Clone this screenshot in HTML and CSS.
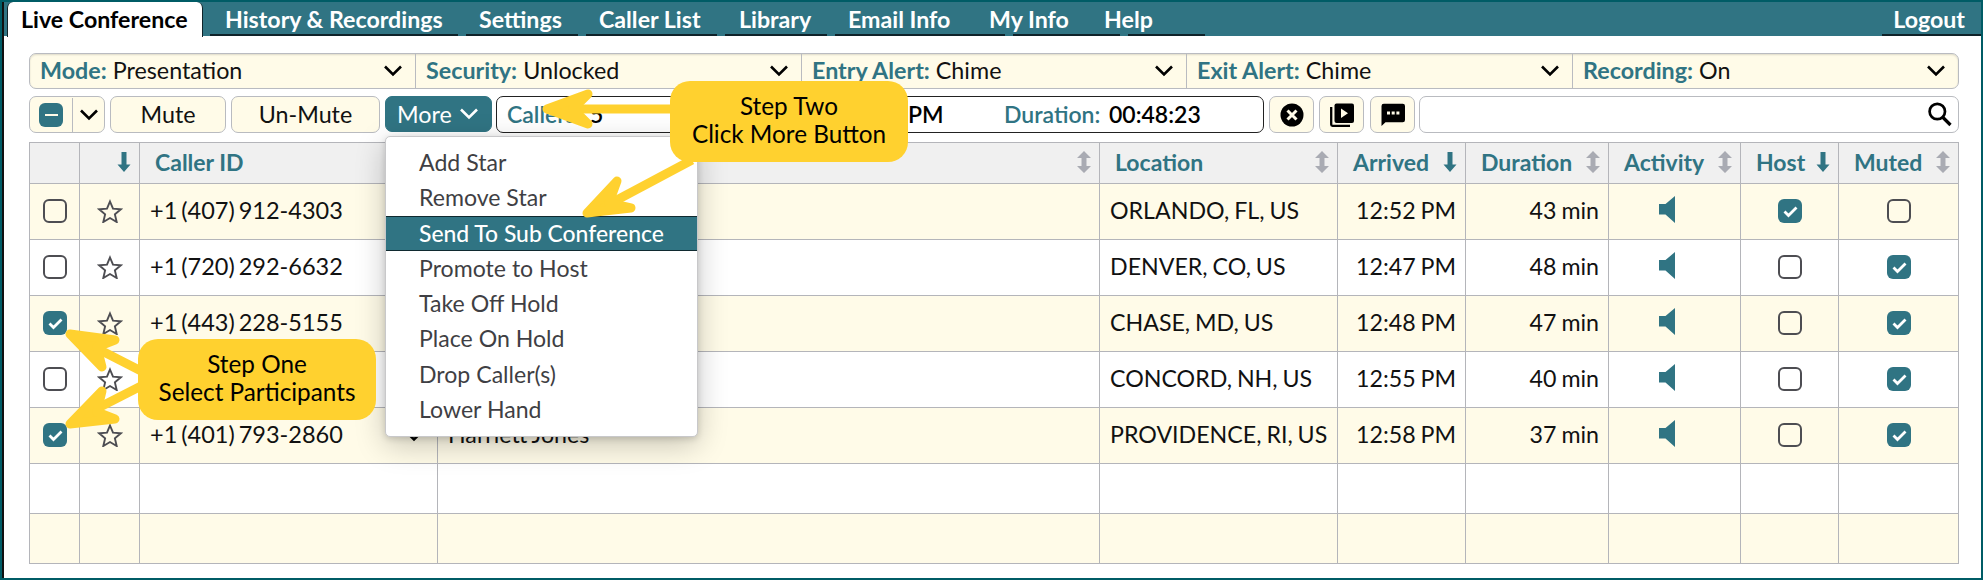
FILE: index.html
```html
<!DOCTYPE html>
<html lang="en">
<head>
<meta charset="utf-8">
<title>Live Conference</title>
<link rel="stylesheet" href="styles.css">
</head>
<body>
<svg class="defs" width="0" height="0" aria-hidden="true">
  <symbol id="chev" viewBox="0 0 18 12"><path d="M1 1.500 9 9.500l8-8" fill="none" stroke="currentColor" stroke-width="2.600"/></symbol>
  <symbol id="down" viewBox="0 0 14 20"><path d="M4.500 0h5v12.500H13.500L7 20 .5 12.500h4z" fill="currentColor"/></symbol>
  <symbol id="both" viewBox="0 0 14 22"><path d="M7 0l7 7H9.500v8H14l-7 7-7-7h4.500V7H0z" fill="currentColor"/></symbol>
  <symbol id="star" viewBox="0 0 26 24"><path d="M13 2.500l3 7.200 7.800.600-5.900 5.100 1.800 7.600-6.700-4-6.700 4 1.800-7.600L2.200 10.300l7.800-.600z" fill="none" stroke="#4d4d52" stroke-width="1.900"/></symbol>
  <symbol id="speaker" viewBox="0 0 16 27"><path d="M0 8h6.500L16 0v27L6.500 18.500H0z" fill="#307483"/></symbol>
  <symbol id="tick" viewBox="0 0 24 24"><path d="M6.500 12.500l4 4L18.500 8.500" fill="none" stroke="#fff" stroke-width="2.800"/></symbol>
</svg>
<div class="app">
  <nav class="nav">
    <a class="tab active">Live Conference</a>
    <a class="tab t1">History &amp; Recordings</a>
    <a class="tab t2">Settings</a>
    <a class="tab t3">Caller List</a>
    <a class="tab t4">Library</a>
    <a class="tab t5">Email Info</a>
    <a class="tab t6">My Info</a>
    <a class="tab t7">Help</a>
    <a class="tab out">Logout</a>
  </nav>
  <div class="rules"><i class="r1"></i><i class="r2"></i><i class="r3"></i><i class="r4"></i><i class="r5"></i><i class="r6"></i><i class="r7"></i><i class="r8"></i></div>
  <main class="content">
    <div class="modes">
      <div class="mode"><b>Mode:</b><span>Presentation</span><svg class="chev"><use href="#chev"/></svg></div>
      <div class="mode"><b>Security:</b><span>Unlocked</span><svg class="chev"><use href="#chev"/></svg></div>
      <div class="mode"><b>Entry Alert:</b><span>Chime</span><svg class="chev"><use href="#chev"/></svg></div>
      <div class="mode"><b>Exit Alert:</b><span>Chime</span><svg class="chev"><use href="#chev"/></svg></div>
      <div class="mode"><b>Recording:</b><span>On</span><svg class="chev"><use href="#chev"/></svg></div>
    </div>
    <div class="tools">
      <div class="select"><span class="all"><span class="box on minus"></span></span><span class="drop"><svg class="chev"><use href="#chev"/></svg></span></div>
      <button class="btn mute">Mute</button>
      <button class="btn unmute">Un-Mute</button>
      <div class="more-wrap">
        <button class="btn more">More<svg class="chev"><use href="#chev"/></svg></button>
        <div class="menu">
          <a>Add Star</a><a>Remove Star</a><a class="hot">Send To Sub Conference</a><a>Promote to Host</a><a>Take Off Hold</a><a>Place On Hold</a><a>Drop Caller(s)</a><a>Lower Hand</a>
        </div>
      </div>
      <div class="status"><b class="s1">Callers:</b><span class="s2">5</span><span class="s3">PM</span><b class="s4">Duration:</b><span class="s5">00:48:23</span></div>
      <button class="btn icon"><svg width="24" height="24" viewBox="0 0 24 24"><circle cx="12" cy="12" r="11.500"/><path d="M7.500 7.500l9 9m0-9l-9 9" stroke="#fffbe8" stroke-width="3"/></svg></button>
      <button class="btn icon"><svg width="24" height="24" viewBox="0 0 24 24"><path d="M4.500 2.500a2 2 0 0 1 2-2H22a2 2 0 0 1 2 2V18a2 2 0 0 1-2 2H6.500a2 2 0 0 1-2-2z"/><path d="M1.200 4v17.500q0 1.300 1.300 1.300H20" fill="none" stroke="#000" stroke-width="2.300"/><path d="M11 5.500v9.500l7-4.700z" fill="#fffbe8"/></svg></button>
      <button class="btn icon last"><svg width="24" height="24" viewBox="0 0 24 24"><path d="M.5 3a2.300 2.300 0 0 1 2.300-2.300h19A2.300 2.300 0 0 1 24 3v14a2.300 2.300 0 0 1-2.300 2.300H4.500L.5 23z"/><path d="M6 8.500h3v3H6zm4.700 0h3v3h-3zm4.700 0h3v3h-3z" fill="#fffbe8"/></svg></button>
      <div class="search"><svg width="24" height="25" viewBox="0 0 24 25"><circle cx="9.300" cy="9.500" r="7.700" fill="none" stroke="#000" stroke-width="2.700"/><path d="M14.500 15l8 8" stroke="#000" stroke-width="3.200"/></svg></div>
    </div>
    <table class="grid">
      <colgroup><col class="c1"><col class="c2"><col class="c3"><col class="c4"><col class="c5"><col class="c6"><col class="c7"><col class="c8"><col class="c9"><col class="c10"></colgroup>
      <thead><tr>
        <th></th>
        <th><div class="h"><svg class="down"><use href="#down"/></svg></div></th>
        <th><div class="h">Caller ID</div></th>
        <th><div class="h"><svg class="both"><use href="#both"/></svg></div></th>
        <th><div class="h">Location<svg class="both"><use href="#both"/></svg></div></th>
        <th><div class="h">Arrived<svg class="down"><use href="#down"/></svg></div></th>
        <th><div class="h">Duration<svg class="both"><use href="#both"/></svg></div></th>
        <th><div class="h">Activity<svg class="both"><use href="#both"/></svg></div></th>
        <th><div class="h">Host<svg class="down"><use href="#down"/></svg></div></th>
        <th><div class="h">Muted<svg class="both"><use href="#both"/></svg></div></th>
      </tr></thead>
      <tbody>
        <tr><td class="mid"><span class="box"></span></td><td class="mid"><svg class="star"><use href="#star"/></svg></td><td class="tel">+1 (407) 912-4303</td><td></td><td>ORLANDO, FL, US</td><td class="num">12:52 PM</td><td class="num">43 min</td><td class="mid act"><svg class="speaker"><use href="#speaker"/></svg></td><td class="mid"><span class="box on"><svg><use href="#tick"/></svg></span></td><td class="mid"><span class="box"></span></td></tr>
        <tr><td class="mid"><span class="box"></span></td><td class="mid"><svg class="star"><use href="#star"/></svg></td><td class="tel">+1 (720) 292-6632</td><td></td><td>DENVER, CO, US</td><td class="num">12:47 PM</td><td class="num">48 min</td><td class="mid act"><svg class="speaker"><use href="#speaker"/></svg></td><td class="mid"><span class="box"></span></td><td class="mid"><span class="box on"><svg><use href="#tick"/></svg></span></td></tr>
        <tr><td class="mid"><span class="box on"><svg><use href="#tick"/></svg></span></td><td class="mid"><svg class="star"><use href="#star"/></svg></td><td class="tel">+1 (443) 228-5155</td><td></td><td>CHASE, MD, US</td><td class="num">12:48 PM</td><td class="num">47 min</td><td class="mid act"><svg class="speaker"><use href="#speaker"/></svg></td><td class="mid"><span class="box"></span></td><td class="mid"><span class="box on"><svg><use href="#tick"/></svg></span></td></tr>
        <tr><td class="mid"><span class="box"></span></td><td class="mid"><svg class="star"><use href="#star"/></svg></td><td></td><td></td><td>CONCORD, NH, US</td><td class="num">12:55 PM</td><td class="num">40 min</td><td class="mid act"><svg class="speaker"><use href="#speaker"/></svg></td><td class="mid"><span class="box"></span></td><td class="mid"><span class="box on"><svg><use href="#tick"/></svg></span></td></tr>
        <tr><td class="mid"><span class="box on"><svg><use href="#tick"/></svg></span></td><td class="mid"><svg class="star"><use href="#star"/></svg></td><td class="tel"><div class="caller">+1 (401) 793-2860<svg class="chev"><use href="#chev"/></svg></div></td><td>Harriett Jones</td><td>PROVIDENCE, RI, US</td><td class="num">12:58 PM</td><td class="num">37 min</td><td class="mid act"><svg class="speaker"><use href="#speaker"/></svg></td><td class="mid"><span class="box"></span></td><td class="mid"><span class="box on"><svg><use href="#tick"/></svg></span></td></tr>
        <tr class="empty"><td></td><td></td><td></td><td></td><td></td><td></td><td></td><td></td><td></td><td></td></tr>
        <tr class="empty"><td></td><td></td><td></td><td></td><td></td><td></td><td></td><td></td><td></td><td></td></tr>
      </tbody>
    </table>
  </main>
  <svg class="arrows" width="1983" height="580" viewBox="0 0 1983 580">
    <g class="shaft"><path d="M675 109H570"/><path d="M692 160L615 201"/><path d="M145 373L100 350"/><path d="M145 384L100 407"/></g>
    <g class="head"><path d="M588 94L547 109 588 124 573 109z"/><path d="M617 181L587 213 631 208 609 203z"/><path d="M102 367L70 334 115 340 97 347z"/><path d="M102 391L70 424 115 419 97 412z"/></g>
  </svg>
  <div class="callout two">Step Two<br>Click More Button</div>
  <div class="callout one">Step One<br>Select Participants</div>
</div>
</body>
</html>
```
FILE: styles.css
```css
* { box-sizing: border-box; }
body { margin: 0; font-family: Lato, "Liberation Sans", sans-serif; font-size: 23.300px; color: #111; }
.defs { position: absolute; }
svg { flex: none; }
.app { position: relative; width: 1983px; height: 580px; border: 2px solid #005c66; background: #fff; overflow: hidden; box-shadow: inset 2px 0 #101010; }
.nav { height: 32px; margin-left: 2px; background: #307483; display: flex; position: relative; }
.tab { color: #fff; font-weight: 700; font-size: 23.200px; line-height: 34px; white-space: nowrap; height: 32px; }
.tab.active { width: 196px; height: 35px; margin-left: 3px; margin-right: 22px; padding-left: 13px; background: #fff; color: #000; border: solid #10242a; border-width: 0 1px; border-radius: 6px 6px 0 0; z-index: 1; }
.t1 { width: 254px; } .t2 { width: 120px; } .t3 { width: 140px; } .t4 { width: 109px; } .t5 { width: 141px; } .t6 { width: 115px; }
.out { margin-left: auto; margin-right: 16px; }
.rules { height: 2px; margin-left: 2px; padding-left: 206px; background: #307483; display: flex; gap: 8px; }
.rules i { height: 2px; background: #0f2229; }
.r1 { width: 248px; } .r2 { width: 112px; } .r3 { width: 131px; } .r4 { width: 102px; } .r5 { width: 170px; } .r6 { width: 107px; } .r7 { width: 77px; } .r8 { width: 99px; margin-left: auto; }
.content { padding: 17px 22px 0 27px; }
.modes { height: 36px; border: 1.500px solid #b9bbc0; border-radius: 7px; background: #fffbe8; display: grid; grid-template-columns: 385px 386px 385px 386px 1fr; overflow: hidden; box-shadow: inset 0 1px 2px #0002; }
.mode { display: flex; align-items: center; padding: 0 13px 2px 10px; gap: 6px; border-left: 1px solid #b9bbc0; }
.mode:first-child { border-left: 0; }
b, th { font-weight: 700; color: #307483; }
.chev { width: 18px; height: 12px; color: #000; }
.mode .chev { margin: 2px 0 0 auto; }
.tools { display: flex; height: 37px; margin-top: 7px; }
.tools > * { flex: none; }
.btn, .select, .search, .status { border: 1.500px solid #b9bbc0; border-radius: 7px; background: #fffbe8; height: 37px; display: flex; align-items: center; justify-content: center; padding: 0; color: #111; font: inherit; }
.btn { padding-bottom: 1px; }
.select { width: 76px; }
.all { width: 43px; height: 34px; border-right: 1px solid #b9bbc0; display: grid; place-items: center; }
.drop { flex: 1; display: grid; place-items: center; }
.mute { width: 116px; margin-left: 5px; }
.unmute { width: 149px; margin-left: 5px; }
.more-wrap { position: relative; margin-left: 5px; }
.more { width: 107px; height: 36px; background: #307483; border-color: #307483; color: #fff; gap: 8px; padding-right: 2px; }
.more .chev { color: #fff; }
.menu { position: absolute; z-index: 2; left: 0; top: 40px; width: 313px; height: 301px; padding-top: 8px; background: #fff; border: 1px solid #c8c8ca; border-radius: 5px; box-shadow: 0 8px 30px rgba(0,0,0,.22), 0 2px 6px rgba(0,0,0,.15); }
.menu a { display: block; height: 35.300px; line-height: 35px; padding-left: 33px; color: #3f3f44; white-space: nowrap; font-size: 23.100px; }
.menu .hot { background: #307483; color: #fff; font-weight: 500; font-size: 22.900px; line-height: 34px; box-shadow: inset 0 1px #102a30, inset 0 -1px #102a30; }
.status { width: 768px; margin-left: 4px; border-color: #222; background: #fff; justify-content: flex-start; padding: 0 0 1px 10px; font-size: 23px; font-weight: 600; color: #000; white-space: nowrap; }
.status b { font-weight: 600; }
.s1 { width: 83px; } .s2 { width: 318px; } .s3 { width: 96px; } .s4 { width: 105px; }
.icon { width: 45px; margin-left: 5px; padding: 0; }
.last { margin-left: 6px; }
.tools .search { flex: 1; margin-left: 4px; background: #fff; justify-content: flex-end; padding-right: 6px; }
.grid { width: 1930px; margin-top: 9px; table-layout: fixed; border-collapse: collapse; }
.c1 { width: 50px; } .c2 { width: 60px; } .c3 { width: 298px; } .c4 { width: 662px; } .c5 { width: 238px; } .c6 { width: 128px; } .c7 { width: 143px; } .c8 { width: 132px; } .c9 { width: 98px; } .c10 { width: 120px; }
th, td { border: 1px solid #b4b5ba; padding: 0 10px 3px; white-space: nowrap; }
th { height: 41px; background: #f0f0f0; text-align: left; padding: 0 8px 3px 15px; font-size: 23px; }
td { height: 56px; font-size: 23.200px; word-spacing: -1px; }
.tel { font-size: 23.500px; word-spacing: -2px; }
tr { background: #fff; }
tbody tr:nth-child(odd) { background: #fffbe8; }
.empty td { height: 50px; }
.h { display: flex; align-items: center; }
.h svg { margin-left: auto; }
.down { width: 14px; height: 20px; color: #307483; }
.both { width: 14px; height: 22px; color: #a9abb3; }
.num { text-align: right; padding-right: 9px; }
.mid { text-align: center; padding: 0 0 2px; font-size: 0; }
.act { padding-right: 15px; padding-bottom: 4px; }
.box { display: inline-block; width: 24px; height: 24px; border: 2.500px solid #4d4d52; border-radius: 6px; vertical-align: middle; }
.box.on { background: #307483; border: 0; }
.box svg { width: 24px; height: 24px; display: block; }
.minus { display: grid; place-items: center; }
.minus::after { content: ""; width: 13px; height: 2px; background: #fffbe8; }
.star { width: 26px; height: 24px; vertical-align: middle; }
.speaker { width: 16px; height: 27px; vertical-align: middle; }
.caller { display: flex; align-items: center; justify-content: space-between; padding-right: 4px; }
.caller .chev { margin-top: 4px; }
.arrows { position: absolute; left: -2px; top: -2px; z-index: 3; }
.shaft { stroke: #ffd12f; stroke-width: 9; fill: none; }
.head { stroke: #ffd12f; stroke-width: 9; stroke-linejoin: round; fill: #ffd12f; }
.callout { position: absolute; z-index: 4; width: 238px; height: 81px; border-radius: 20px; background: #ffd12f; color: #000; text-align: center; font-size: 24.300px; line-height: 28px; padding-top: 11px; white-space: nowrap; }
.two { left: 668px; top: 79px; }
.one { left: 136px; top: 337px; }
```
